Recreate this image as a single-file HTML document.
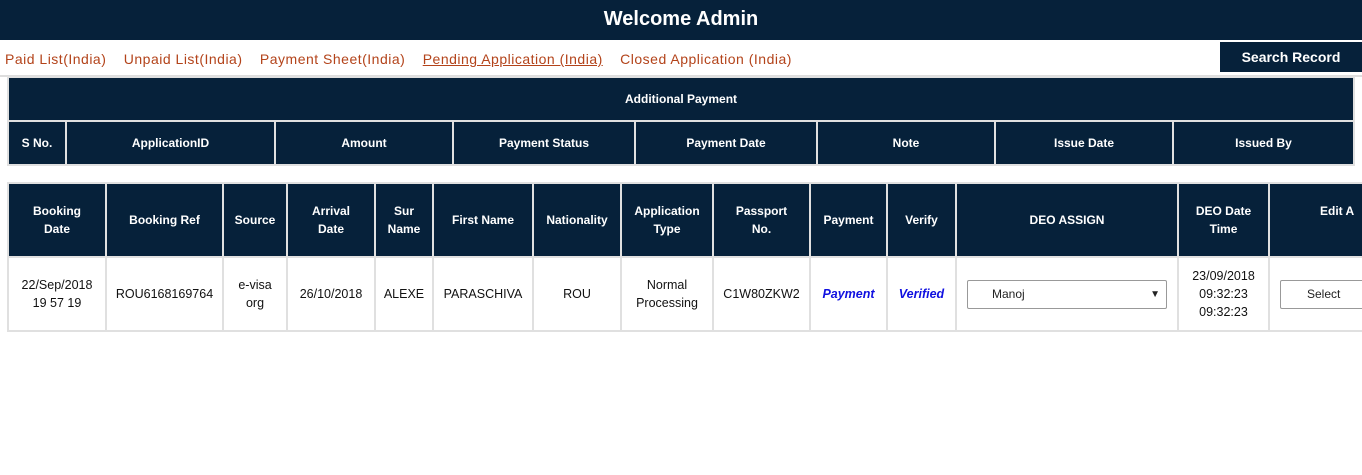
<!DOCTYPE html>
<html><head><style>
body{margin:0;width:1362px;height:475px;overflow:hidden;background:#fff;font-family:"Liberation Sans",sans-serif;position:relative}
.hdr{position:absolute;left:0;top:0;width:1362px;height:40px;background:#06213a;color:#fff;font-weight:bold;font-size:20px;text-align:center;line-height:38px}
.nav{position:absolute;left:5px;top:51px;font-size:14px;letter-spacing:0.5px;color:#b3431a;white-space:nowrap}
.nav span{margin-right:13px}
.btn{position:absolute;left:1220px;top:42px;width:142px;height:30px;background:#06213a;color:#fff;font-weight:bold;font-size:14px;text-align:center;line-height:30px}
.line{position:absolute;left:0;top:75px;width:1362px;height:2px;background:#ddd}
table{position:absolute;border-collapse:collapse;table-layout:fixed}
td,th{border:2px solid #e0e0e0;text-align:center;font-size:12px;padding:0}
th{background:#06213a;color:#fff;font-weight:bold;line-height:18px}
td{color:#111;font-size:12.5px;line-height:18px}
.t1{left:7px;top:76px;width:1346px}
.t2{left:7px;top:182px;width:1500px}
.sel{border:1px solid #999;border-radius:2px;height:27px;text-align:left;font-size:12px;line-height:27px;padding-left:24px;position:relative;color:#222}
.blue{color:#1010e0;font-style:italic;font-weight:bold}
</style></head><body>
<div class="hdr">Welcome Admin</div>
<div class="nav"><span>Paid List(India)</span> <span>Unpaid List(India)</span> <span>Payment Sheet(India)</span> <span style="text-decoration:underline">Pending Application (India)</span> <span>Closed Application (India)</span></div>
<div class="btn">Search Record</div>
<div class="line"></div>
<table class="t1">
<colgroup><col style="width:58px"><col style="width:209px"><col style="width:178px"><col style="width:182px"><col style="width:182px"><col style="width:178px"><col style="width:178px"><col style="width:181px"></colgroup>
<tr><th colspan="8" style="height:42px">Additional Payment</th></tr>
<tr><th style="height:42px">S No.</th><th>ApplicationID</th><th>Amount</th><th>Payment Status</th><th>Payment Date</th><th>Note</th><th>Issue Date</th><th>Issued By</th></tr>
</table>
<table class="t2">
<colgroup><col style="width:98px"><col style="width:117px"><col style="width:64px"><col style="width:88px"><col style="width:58px"><col style="width:100px"><col style="width:88px"><col style="width:92px"><col style="width:97px"><col style="width:77px"><col style="width:69px"><col style="width:222px"><col style="width:91px"><col style="width:239px"></colgroup>
<tr><th style="height:72px">Booking<br>Date</th><th>Booking Ref</th><th>Source</th><th>Arrival<br>Date</th><th>Sur<br>Name</th><th>First Name</th><th>Nationality</th><th>Application<br>Type</th><th>Passport<br>No.</th><th>Payment</th><th>Verify</th><th>DEO ASSIGN</th><th>DEO Date<br>Time</th><th style="text-align:left;padding-left:50px">Edit A<br>&nbsp;</th></tr>
<tr><td style="height:72px">22/Sep/2018<br>19 57 19</td><td>ROU6168169764</td><td>e-visa<br>org</td><td>26/10/2018</td><td>ALEXE</td><td>PARASCHIVA</td><td>ROU</td><td>Normal<br>Processing</td><td>C1W80ZKW2</td><td class="blue">Payment</td><td class="blue">Verified</td><td style="padding:0 10px"><div class="sel">Manoj<span style="position:absolute;right:6px;font-size:10px">&#9660;</span></div></td><td>23/09/2018<br>09:32:23<br>09:32:23</td><td style="text-align:left;padding-left:10px"><div class="sel" style="width:200px;padding-left:26px">Select</div></td></tr>
</table>
</body></html>
